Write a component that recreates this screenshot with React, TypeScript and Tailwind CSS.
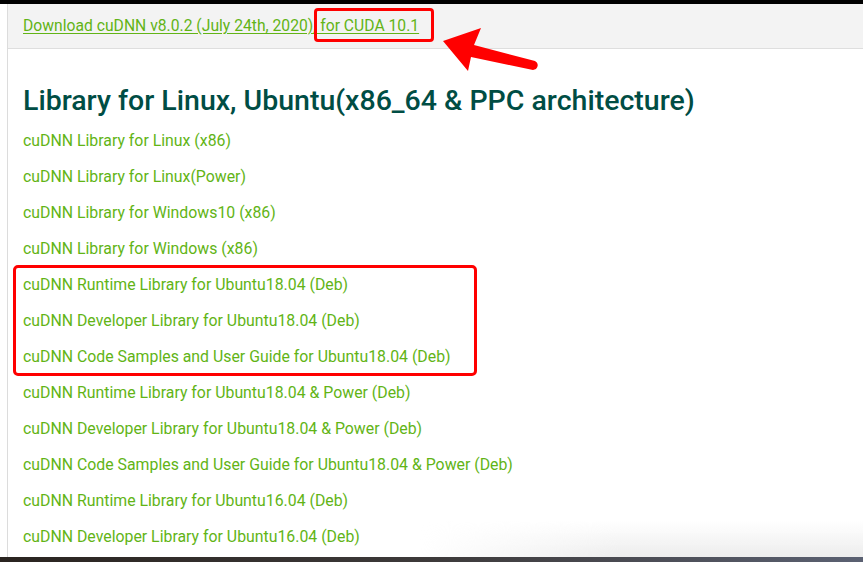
import React from 'react';

const links = [
  'cuDNN Library for Linux (x86)',
  'cuDNN Library for Linux(Power)',
  'cuDNN Library for Windows10 (x86)',
  'cuDNN Library for Windows (x86)',
  'cuDNN Runtime Library for Ubuntu18.04 (Deb)',
  'cuDNN Developer Library for Ubuntu18.04 (Deb)',
  'cuDNN Code Samples and User Guide for Ubuntu18.04 (Deb)',
  'cuDNN Runtime Library for Ubuntu18.04 & Power (Deb)',
  'cuDNN Developer Library for Ubuntu18.04 & Power (Deb)',
  'cuDNN Code Samples and User Guide for Ubuntu18.04 & Power (Deb)',
  'cuDNN Runtime Library for Ubuntu16.04 (Deb)',
  'cuDNN Developer Library for Ubuntu16.04 (Deb)',
];

const App: React.FC = () => {
  return (
    <div
      className="relative flex h-[562px] w-[863px] flex-col overflow-hidden bg-white"
      style={{ fontFamily: 'Roboto, "Liberation Sans", sans-serif' }}
    >
      <div className="h-[4px] shrink-0 bg-black" />

      {/* soft shading near the bottom right */}
      <div className="pointer-events-none absolute bottom-[5px] left-[420px] right-0 h-[36px] bg-gradient-to-b from-transparent to-[#ededed] [mask-image:linear-gradient(to_right,transparent,black_45%)]" />

      <div className="relative flex flex-1">
        <div className="w-[7px] shrink-0 bg-white" />
        <div className="flex flex-1 flex-col border-l border-[#dcdcdc]">
          {/* download header */}
          <div className="flex h-[45px] shrink-0 items-center border-b border-[#dedede] bg-[#f3f3f3] pl-[15px]">
            <a href="#" className="text-[15.7px] text-[#62b416] underline underline-offset-2">
              Download cuDNN v8.0.2 (July 24th, 2020), for CUDA 10.1
            </a>
          </div>

          <h2 className="mt-[36px] h-[32px] pl-[15px] text-[28.5px] font-medium leading-[32px] text-[#004d44]">
            Library for Linux, Ubuntu(x86_64 &amp; PPC architecture)
          </h2>

          <ul className="mt-[6px] pl-[15px]">
            {links.map((l) => (
              <li key={l} className="flex h-[36px] items-center">
                <a href="#" className="text-[15.85px] text-[#62b416]">
                  {l}
                </a>
              </li>
            ))}
          </ul>
        </div>
      </div>

      <div className="h-[5px] shrink-0 bg-gradient-to-r from-[#2a2420] via-[#3d3a3a] to-[#5b6172]" />

      {/* annotations */}
      <div className="pointer-events-none absolute left-[314px] top-[8px] h-[34px] w-[120px] rounded-[4px] border-[3px] border-[#ff0000]" />
      <div className="pointer-events-none absolute left-[13px] top-[265px] h-[111px] w-[464px] rounded-[5px] border-[3px] border-[#ff0000]" />
      <svg className="pointer-events-none absolute left-0 top-0" width="863" height="562">
        <path
          d="M443 41 L481 28 L474 45 L535 61 Q540 64 536 69 L533 70 L471 57 L468 71 Z"
          fill="#ff0000"
        />
      </svg>
    </div>
  );
};

export default App;
